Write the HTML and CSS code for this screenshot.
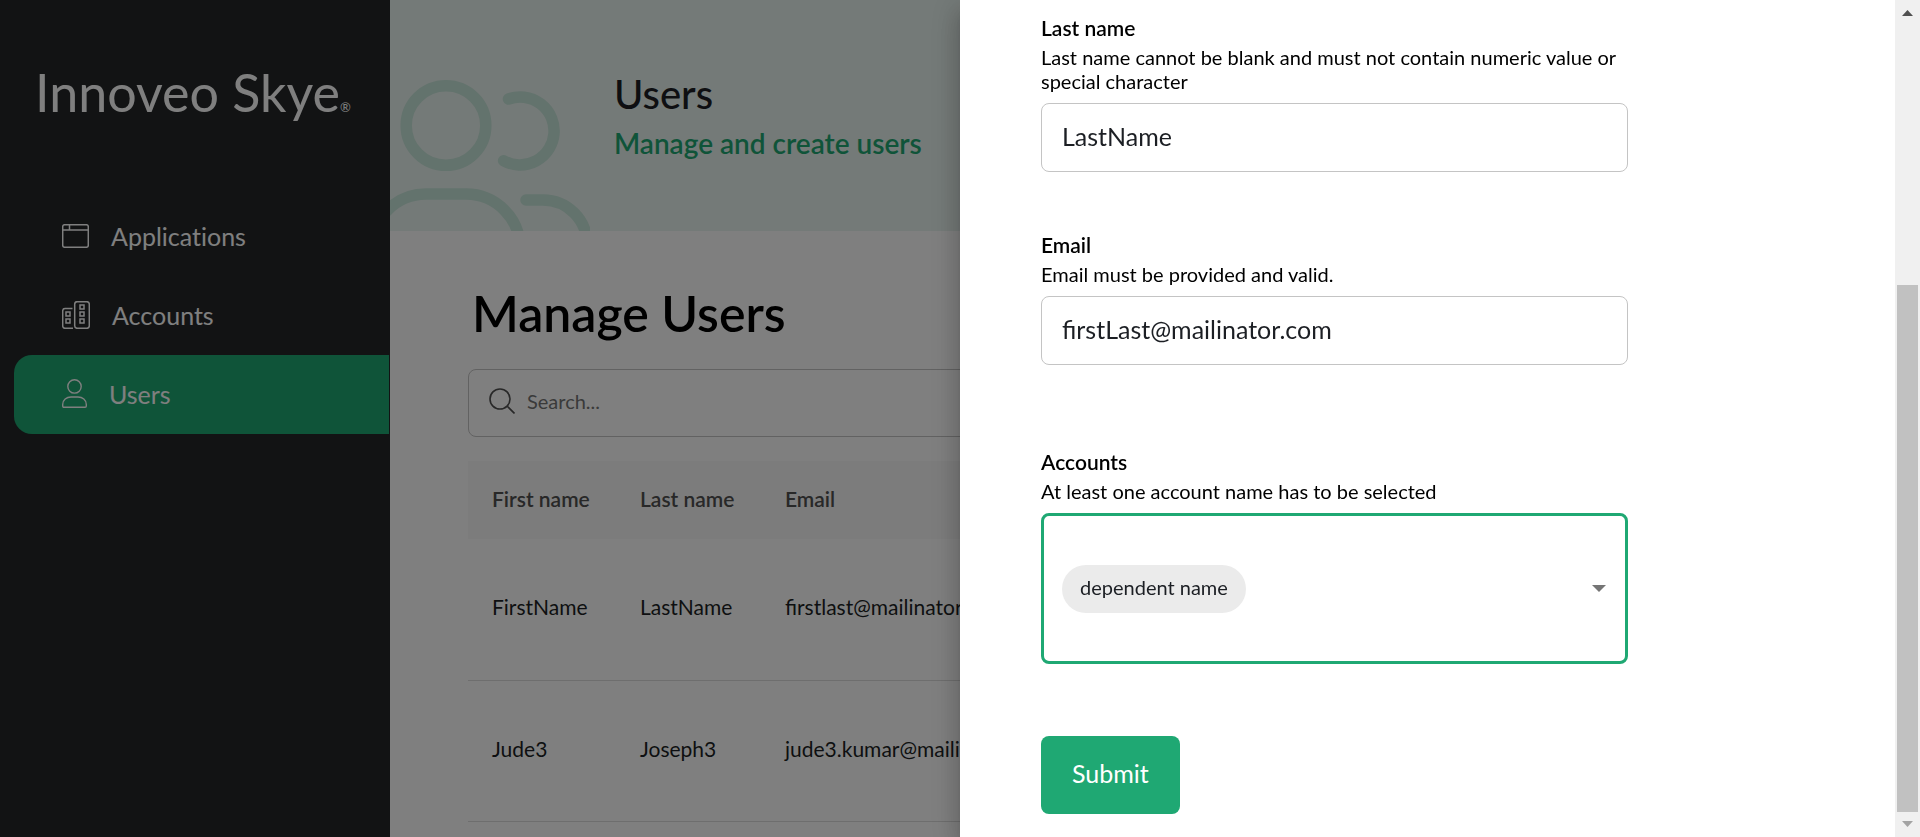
FILE: index.html
```html
<!DOCTYPE html>
<html lang="en">
<head>
<meta charset="utf-8">
<title>Innoveo Skye - Users</title>
<link rel="stylesheet" href="styles.css">
</head>
<body>
<div class="app">
  <aside class="sidebar">
    <div class="brand">Innoveo Skye<span class="brand-mark">®</span></div>
    <nav class="nav">
      <a class="nav-item" href="#applications">
        <svg width="27" height="24" viewBox="0 0 27 24" fill="none" stroke="currentColor" stroke-width="1.5"><rect x=".7" y=".7" width="25.6" height="22.6" rx="2"/><path d="M.7 6h25.6M7.5.7V6"/></svg>
        <span>Applications</span>
      </a>
      <a class="nav-item" href="#accounts">
        <svg width="28" height="28" viewBox="0 0 28 28" fill="none" stroke="currentColor" stroke-width="1.5"><rect x="12.7" y=".7" width="14.6" height="26.6" rx="2.5"/><path d="M10.5 7.6H3A2.3 2.3 0 0 0 .7 9.900V25A2.300 2.300 0 0 0 3 27.300h8"/><rect x="18" y="4" width="4" height="4"/><rect x="18" y="11" width="4" height="4"/><rect x="18" y="18" width="4" height="4"/><rect x="4" y="11" width="4" height="4"/><rect x="4" y="18" width="4" height="4"/></svg>
        <span>Accounts</span>
      </a>
      <a class="nav-item nav-item-active" href="#users" aria-current="page">
        <svg width="25" height="29" viewBox="0 0 25 29" fill="none" stroke="currentColor" stroke-width="1.4"><circle cx="12.500" cy="7.400" r="6.700"/><path d="M.7 27v-1.500C.7 21 4.500 18 9 18h7c4.500 0 8.300 3 8.300 7.500V27q0 1.300-1.300 1.300H2Q.7 28.300.7 27z"/></svg>
        <span>Users</span>
      </a>
    </nav>
  </aside>
  <main class="main">
    <header class="banner">
      <svg class="banner-art" width="200" height="231" viewBox="0 0 200 231" fill="none" stroke="currentColor" stroke-width="11.500" stroke-linecap="round"><circle cx="56" cy="125.500" r="39.800"/><path d="M118.500 99A34 34 0 1 1 113.600 160.700"/><path d="M-18 248A54 54 0 0 1 36 194H76A54 54 0 0 1 130 248"/><path d="M136 200H153A44 44 0 0 1 197 244"/></svg>
      <h2 class="banner-title">Users</h2>
      <p class="banner-sub">Manage and create users</p>
    </header>
    <section class="content">
      <h1 class="page-title">Manage Users</h1>
      <label class="search">
        <svg width="26" height="26" viewBox="0 0 26 26" fill="none" stroke="#505050" stroke-width="1.600"><circle cx="11" cy="11" r="10"/><path d="M18 18l7.500 7.500"/></svg>
        <input class="search-input" type="search" placeholder="Search..." aria-label="Search">
      </label>
      <table class="users">
        <thead><tr><th>First name</th><th>Last name</th><th>Email</th></tr></thead>
        <tbody>
          <tr><td>FirstName</td><td>LastName</td><td>firstlast@mailinator.com</td></tr>
          <tr><td>Jude3</td><td>Joseph3</td><td>jude3.kumar@mailinator.com</td></tr>
        </tbody>
      </table>
    </section>
  </main>
</div>
<div class="backdrop"></div>
<div class="drawer" role="dialog" aria-label="User details">
  <form class="form">
    <div class="field">
      <label class="label" for="last-name">Last name</label>
      <p class="hint">Last name cannot be blank and must not contain numeric value or special character</p>
      <input class="text-input" id="last-name" type="text" value="LastName">
    </div>
    <div class="field field-spaced">
      <label class="label" for="email">Email</label>
      <p class="hint">Email must be provided and valid.</p>
      <input class="text-input" id="email" type="email" value="firstLast@mailinator.com">
    </div>
    <div class="field">
      <label class="label" for="accounts">Accounts</label>
      <p class="hint">At least one account name has to be selected</p>
      <div class="picker">
        <select class="chip" id="accounts"><option>dependent name</option></select>
        <svg width="14" height="7" viewBox="0 0 14 7" fill="#757575"><path d="M0 0h14L7 7z"/></svg>
      </div>
    </div>
    <button class="submit" type="submit">Submit</button>
  </form>
  <div class="scrollbar" aria-hidden="true">
    <svg width="11" height="6" viewBox="0 0 11 6" fill="#505050"><path d="M0 6h11L5.500 0z"/></svg>
    <div class="scroll-track"><div class="scroll-thumb"></div></div>
    <svg width="11" height="6" viewBox="0 0 11 6" fill="#a3a3a3"><path d="M0 0h11L5.500 6z"/></svg>
  </div>
</div>
</body>
</html>
```
FILE: styles.css
```css
* { box-sizing: border-box; }
body {
  margin: 0;
  height: 100vh;
  overflow: hidden;
  font-family: Lato, sans-serif;
  font-size: 20px;
  line-height: 24px;
  color: #1c1f24;
  background: #fff;
}
h1, h2, p { margin: 0; }
svg { flex: none; }
button, input, select { font: inherit; color: inherit; }

.app { display: flex; height: 100%; }

.sidebar { flex: none; width: 390px; background: #242729; color: #fff; }
.brand { padding: 62px 0 0 35px; height: 197px; font-size: 52px; line-height: 60px; white-space: nowrap; }
.brand-mark { font-size: 13px; }
.nav { padding: 0 1px 0 14px; }
.nav-item {
  display: flex;
  align-items: center;
  gap: 22px;
  height: 79px;
  padding: 0 0 2px 48px;
  border-radius: 18px 0 0 18px;
  color: #fff;
  font-size: 25px;
  font-variant-ligatures: none;
  text-decoration: none;
}
.nav-item-active { background: #1fa873; }

.main { flex: 1; min-width: 0; }
.banner {
  position: relative;
  overflow: hidden;
  height: 231px;
  padding: 69px 0 0 224px;
  background: #e9f4f0;
}
.banner-art { position: absolute; left: 0; top: 0; color: #c6e6da; }
.banner-title { font-size: 40px; line-height: 50px; font-weight: 500; }
.banner-sub { padding-top: 6px; font-size: 28px; line-height: 36px; font-weight: 600; color: #1fa873; }

.content { padding: 52px 78px 0; }
.page-title { padding-left: 4px; font-size: 50px; line-height: 60px; font-weight: 600; color: #000; }
.search {
  display: flex;
  align-items: center;
  gap: 12px;
  height: 68px;
  margin-top: 26px;
  padding: 0 20px 4px;
  border: 1px solid #c4c4c4;
  border-radius: 8px;
}
.search-input { flex: 1; min-width: 0; padding: 0; border: 0; outline: 0; background: none; }
.search-input::placeholder { color: #757575; opacity: 1; }

.users { width: 100%; margin-top: 24px; border-collapse: collapse; table-layout: fixed; font-size: 21px; }
.users th { height: 78px; padding: 0 24px 2px; text-align: left; font-weight: 600; color: #505050; background: #f8f8f8; }
.users td { height: 141px; padding: 0 24px 4px; border-bottom: 1px solid #dcdcdc; }
.users th:nth-child(1) { width: 148px; }
.users th:nth-child(2) { width: 145px; }
.users th, .users td { white-space: nowrap; }

.backdrop { position: fixed; inset: 0; background: rgba(0, 0, 0, 0.5); }

.drawer {
  position: fixed;
  inset: 0 0 0 50%;
  display: flex;
  background: #fff;
  box-shadow: 0 8px 10px -5px rgba(0, 0, 0, 0.2), 0 16px 24px 2px rgba(0, 0, 0, 0.14), 0 6px 30px 5px rgba(0, 0, 0, 0.12);
}
.form { flex: 1; min-width: 0; padding: 16px 267px 0 81px; }
.field { display: flex; flex-direction: column; margin-bottom: 61px; }
.field-spaced { margin-bottom: 85px; }
.label { margin-bottom: 5px; font-size: 21px; font-weight: 600; color: #000; }
.hint { margin-bottom: 10px; color: #000; }
.text-input {
  width: 100%;
  height: 69px;
  padding: 0 20px 3px;
  border: 1px solid #c4c4c4;
  border-radius: 8px;
  background: #fff;
  font-size: 25px;
}
.picker {
  display: flex;
  align-items: center;
  justify-content: space-between;
  height: 151px;
  padding: 0 19px 0 18px;
  border: 3px solid #1fa873;
  border-radius: 8px;
}
.chip {
  appearance: none;
  height: 48px;
  padding: 0 18px 4px;
  border: 0;
  border-radius: 24px;
  background: #ebebeb;
}
.submit {
  height: 78px;
  margin-top: 11px;
  padding: 0 31px 4px;
  border: 0;
  border-radius: 8px;
  background: #1fa873;
  color: #fff;
  font-size: 25px;
}

.scrollbar {
  flex: none;
  display: flex;
  flex-direction: column;
  align-items: center;
  width: 25px;
  padding: 10px 0;
  background: #f0f0f0;
}
.scroll-track { flex: 1; display: flex; flex-direction: column; justify-content: flex-end; padding: 10px 0 9px; }
.scroll-thumb { width: 21px; height: 67%; background: #c1c1c1; }
```
